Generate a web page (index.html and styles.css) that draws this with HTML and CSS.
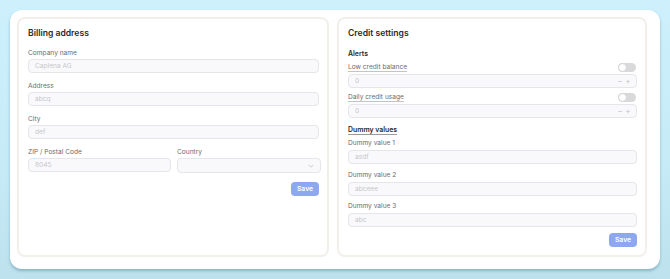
FILE: index.html
```html
<!DOCTYPE html>
<html>
<head>
<meta charset="utf-8">
<link rel="stylesheet" href="styles.css">
</head>
<body>
<div class="frame">
  <section class="panel">
    <h2 class="title">Billing address</h2>
    <div class="fields">
      <div class="field">
        <label class="label">Company name</label>
        <div class="input">Caplena AG</div>
      </div>
      <div class="field">
        <label class="label">Address</label>
        <div class="input">abcq</div>
      </div>
      <div class="field">
        <label class="label">City</label>
        <div class="input">def</div>
      </div>
      <div class="row2">
        <div class="field">
          <label class="label">ZIP / Postal Code</label>
          <div class="input">8045</div>
        </div>
        <div class="field">
          <label class="label">Country</label>
          <div class="input select">
            <svg class="chev" viewBox="0 0 8 5" width="6" height="4"><path d="M1 1l3 3 3-3" fill="none" stroke="#b8b8bc" stroke-width="0.9"/></svg>
          </div>
        </div>
      </div>
    </div>
    <div class="actions left-actions"><button class="btn">Save</button></div>
  </section>

  <section class="panel">
    <h2 class="title">Credit settings</h2>
    <h3 class="sub">Alerts</h3>
    <div class="toggle-row first">
      <span class="ulabel">Low credit balance</span>
      <span class="toggle"><span class="knob"></span></span>
    </div>
    <div class="input stepper"><span>0</span><span class="steps">−&thinsp;+</span></div>
    <div class="toggle-row">
      <span class="ulabel">Daily credit usage</span>
      <span class="toggle"><span class="knob"></span></span>
    </div>
    <div class="input stepper"><span>0</span><span class="steps">−&thinsp;+</span></div>
    <h3 class="sub dummy">Dummy values</h3>
    <div class="dfields">
      <div class="field">
        <label class="label">Dummy value 1</label>
        <div class="input">asdf</div>
      </div>
      <div class="field">
        <label class="label">Dummy value 2</label>
        <div class="input">abceee</div>
      </div>
      <div class="field">
        <label class="label">Dummy value 3</label>
        <div class="input">abc</div>
      </div>
    </div>
    <div class="actions right-actions"><button class="btn">Save</button></div>
  </section>
</div>
</body>
</html>
```

FILE: styles.css
```css
* { box-sizing: border-box; }
html, body { margin: 0; padding: 0; }
body {
  width: 670px;
  height: 279px;
  overflow: hidden;
  background: linear-gradient(180deg, #cdf0fc 0%, #c6ebf7 60%, #bde2ee 100%);
  font-family: Inter, "Noto Sans", sans-serif;
  color: #2b2b2b;
  padding: 10px;
}
.frame {
  width: 650px;
  height: 259px;
  background: #fff;
  border-radius: 12px;
  box-shadow: 0 2px 3px rgba(40, 90, 110, 0.35);
  padding: 7px 13px 15px 7px;
  display: grid;
  grid-template-columns: 312px 310px;
  column-gap: 8px;
}
.panel {
  border: 2px solid #f2efea;
  border-radius: 8px;
  padding: 8px 8px 8px 9px;
  display: flex;
  flex-direction: column;
}
.title {
  margin: 0;
  font-size: 8.6px;
  line-height: 12px;
  font-weight: 600;
  color: #2a2a2a;
}
.fields { margin-top: 9px; display: flex; flex-direction: column; gap: 8px; }
.field { display: flex; flex-direction: column; }
.label {
  font-size: 6.6px;
  line-height: 10px;
  color: #6c6c6c;
  margin-bottom: 1px;
}
.input {
  height: 14px;
  border: 1px solid #e6e6ea;
  background: #f9f9fb;
  border-radius: 4px;
  font-size: 6.6px;
  line-height: 12px;
  color: #c6c6c8;
  padding: 0 6px;
  display: flex;
  align-items: center;
}
.row2 { display: grid; grid-template-columns: 143px 144px; column-gap: 6px; }
.select { height: 15px; justify-content: flex-end; padding-right: 6px; }
.chev { display: block; }
.actions { display: flex; justify-content: flex-end; }
.left-actions { margin-top: 9px; }
.btn {
  font-family: Inter, "Noto Sans", sans-serif;
  font-size: 6.8px;
  font-weight: 600;
  color: #fff;
  background: #8da8ee;
  border: none;
  border-radius: 4px;
  width: 28px;
  height: 14px;
  padding: 0;
  line-height: 14px;
}
.sub {
  margin: 10px 0 0 0;
  font-size: 6.9px;
  line-height: 10px;
  font-weight: 600;
  color: #2a2a2a;
}
.dummy {
  margin-top: 7px;
  text-decoration: underline;
  text-decoration-color: #9a9a9a;
  text-underline-offset: 2px;
  text-decoration-thickness: 0.6px;
}
.toggle-row {
  display: flex;
  justify-content: space-between;
  align-items: center;
  height: 10px;
  margin-top: 4px;
  margin-bottom: 2px;
}
.toggle-row.first { margin-top: 3px; }
.ulabel {
  font-size: 6.6px;
  line-height: 10px;
  color: #6c6c6c;
  text-decoration: underline;
  text-decoration-color: #c4c4c4;
  text-underline-offset: 2px;
  text-decoration-thickness: 0.6px;
}
.toggle {
  width: 18px;
  height: 9px;
  border-radius: 5px;
  background: #d9d9db;
  position: relative;
  margin-right: 1px;
}
.knob {
  position: absolute;
  left: 0;
  top: 0;
  width: 9px;
  height: 9px;
  border-radius: 50%;
  background: #fff;
  border: 1px solid #d2d2d4;
}
.stepper { justify-content: space-between; padding-right: 5px; }
.steps { color: #c4c4c6; font-size: 8px; letter-spacing: 0.5px; }
.dfields { margin-top: 3px; display: flex; flex-direction: column; gap: 5.5px; }
.dfields .label { margin-bottom: 2px; }
.right-actions { margin-top: 6px; }
```
